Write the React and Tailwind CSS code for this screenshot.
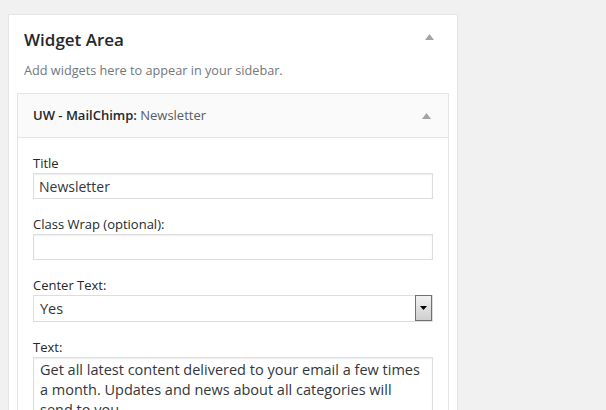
const Arrow = ({ className }) => (
  <svg width="9" height="6" viewBox="0 0 9 6" className={className}>
    <path d="M4.5 0 L9 6 L0 6 Z" fill="#a0a5aa" />
  </svg>
);

const Field = ({ label, children, first }) => (
  <div className={first ? '' : 'mt-[15px]'}>
    <label className="block text-[13px] leading-[20px] text-[#23282d]">{label}</label>
    {children}
  </div>
);

const inputCls =
  'block w-full h-[26px] border border-[#dddddd] bg-white shadow-[inset_0_1px_2px_rgba(0,0,0,0.07)] px-[5px] text-[14px] text-[#32373c] outline-none';

const App = () => {
  return (
    <div
      className="min-h-[410px] h-[410px] overflow-hidden bg-[#f1f1f1] pt-[14px] pl-[8px]"
      style={{ fontFamily: '"Open Sans", "Noto Sans", sans-serif' }}
    >
      {/* Widget area card */}
      <div className="w-[450px] h-[420px] bg-white border border-[#e5e5e5] shadow-[0_1px_1px_rgba(0,0,0,0.04)]">
        <div className="flex items-start justify-between pl-[15px] pr-[23px] pt-[13px]">
          <h2 className="text-[17px] leading-[24px] font-semibold text-[#23282d]">Widget Area</h2>
          <Arrow className="mt-[6px]" />
        </div>
        <p className="px-[15px] mt-[9px] text-[12.7px] leading-[18px] text-[#72777c]">
          Add widgets here to appear in your sidebar.
        </p>

        {/* Widget */}
        <div className="mx-[8px] mt-[14px] border border-[#e5e5e5]">
          <div className="h-[44px] bg-[#fafafa] border-b border-[#e5e5e5] flex items-center justify-between pl-[15px] pr-[17px]">
            <div className="text-[13px] text-[#23282d]">
              <span className="font-semibold">UW - MailChimp:</span>{' '}
              <span className="text-[#555d66]">Newsletter</span>
            </div>
            <Arrow />
          </div>

          <div className="px-[15px] pt-[15px] pb-[15px]">
            <Field label="Title" first>
              <input className={inputCls} defaultValue="Newsletter" />
            </Field>
            <Field label="Class Wrap (optional):">
              <input className={inputCls} defaultValue="" />
            </Field>
            <Field label="Center Text:">
              <div className="flex h-[27px] border border-[#dddddd] bg-white">
                <div className="flex-1 flex items-center pl-[6px] text-[14.5px] text-[#32373c]">Yes</div>
                <div className="w-[17px] h-[26px] -mt-px border border-[#707070] bg-gradient-to-b from-[#f2f2f2] to-[#cfcfcf] flex items-center justify-center">
                  <svg width="7" height="4" viewBox="0 0 7 4">
                    <path d="M0 0 L7 0 L3.5 4 Z" fill="#000" />
                  </svg>
                </div>
              </div>
            </Field>
            <Field label="Text:">
              <div className="h-[80px] border border-[#dddddd] bg-white shadow-[inset_0_1px_2px_rgba(0,0,0,0.07)] px-[6px] pt-[2px] text-[14.5px] leading-[20px] text-[#32373c]">
                Get all latest content delivered to your email a few times a month. Updates and news about all categories will send to you.
              </div>
            </Field>
          </div>
        </div>
      </div>
    </div>
  );
};

export default App;
